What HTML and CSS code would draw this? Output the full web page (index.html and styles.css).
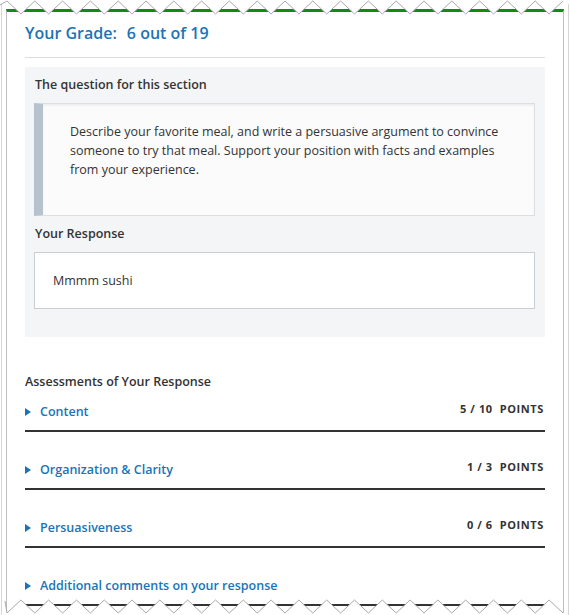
FILE: index.html
```html
<!DOCTYPE html>
<html>
<head>
<meta charset="utf-8">
<link rel="stylesheet" href="styles.css">
</head>
<body>
<div class="stack">
  <div class="card">
    <h1 class="grade"><span>Your Grade:</span><span class="grade-value">6 out of 19</span></h1>
    <hr class="rule">
    <section class="panel">
      <h2 class="label">The question for this section</h2>
      <blockquote class="question">Describe your favorite meal, and write a persuasive argument to convince someone to try that meal. Support your position with facts and examples from your experience.</blockquote>
      <h2 class="label">Your Response</h2>
      <div class="response">Mmmm sushi</div>
    </section>
    <h2 class="label assess-title">Assessments of Your Response</h2>
    <div class="row">
      <span class="toggle"><i class="tri"></i>Content</span>
      <span class="points">5 / 10<span class="pts-word">POINTS</span></span>
    </div>
    <div class="row">
      <span class="toggle"><i class="tri"></i>Organization &amp; Clarity</span>
      <span class="points">1 / 3<span class="pts-word">POINTS</span></span>
    </div>
    <div class="row">
      <span class="toggle"><i class="tri"></i>Persuasiveness</span>
      <span class="points">0 / 6<span class="pts-word">POINTS</span></span>
    </div>
    <div class="row">
      <span class="toggle"><i class="tri"></i>Additional comments on your response</span>
    </div>
  </div>
</div>
<svg class="edge edge-top" width="570" height="16" viewBox="0 0 570 16">
  <path fill="#fff" d="M0,0 H570 V5 L563,1 L549.1,14 L535.2,1 L521.3,14 L507.4,1 L493.5,14 L479.6,1 L465.7,14 L451.8,1 L437.9,14 L424,1 L410.1,14 L396.2,1 L382.3,14 L368.4,1 L354.5,14 L340.6,1 L326.7,14 L312.8,1 L298.9,14 L285,1 L271.1,14 L257.2,1 L243.3,14 L229.4,1 L215.5,14 L201.6,1 L187.7,14 L173.8,1 L159.9,14 L146,1 L132.1,14 L118.2,1 L104.3,14 L90.4,1 L76.5,14 L62.6,1 L48.7,14 L34.8,1 L20.9,14 L7,1 L0,5 Z"/>
  <path fill="none" stroke="#a9a9a9" stroke-width="1" d="M0,5 L7,1 L20.9,14 L34.8,1 L48.7,14 L62.6,1 L76.5,14 L90.4,1 L104.3,14 L118.2,1 L132.1,14 L146,1 L159.9,14 L173.8,1 L187.7,14 L201.6,1 L215.5,14 L229.4,1 L243.3,14 L257.2,1 L271.1,14 L285,1 L298.9,14 L312.8,1 L326.7,14 L340.6,1 L354.5,14 L368.4,1 L382.3,14 L396.2,1 L410.1,14 L424,1 L437.9,14 L451.8,1 L465.7,14 L479.6,1 L493.5,14 L507.4,1 L521.3,14 L535.2,1 L549.1,14 L563,1"/>
</svg>
<svg class="edge edge-bottom" width="570" height="16" viewBox="0 599 570 16">
  <path fill="#fff" d="M4,600 L7,613 L20.9,600 L34.8,613 L48.7,600 L62.6,613 L76.5,600 L90.4,613 L104.3,600 L118.2,613 L132.1,600 L146,613 L159.9,600 L173.8,613 L187.7,600 L201.6,613 L215.5,600 L229.4,613 L243.3,600 L257.2,613 L271.1,600 L285,613 L298.9,600 L312.8,613 L326.7,600 L340.6,613 L354.5,600 L368.4,613 L382.3,600 L396.2,613 L410.1,600 L424,613 L437.9,600 L451.8,613 L465.7,600 L479.6,613 L493.5,600 L507.4,613 L521.3,600 L535.2,613 L549.1,600 L563,613 L565,613 V616 H4 Z"/>
  <path fill="none" stroke="#a9a9a9" stroke-width="1" d="M5,601 L7,613 L20.9,600 L34.8,613 L48.7,600 L62.6,613 L76.5,600 L90.4,613 L104.3,600 L118.2,613 L132.1,600 L146,613 L159.9,600 L173.8,613 L187.7,600 L201.6,613 L215.5,600 L229.4,613 L243.3,600 L257.2,613 L271.1,600 L285,613 L298.9,600 L312.8,613 L326.7,600 L340.6,613 L354.5,600 L368.4,613 L382.3,600 L396.2,613 L410.1,600 L424,613 L437.9,600 L451.8,613 L465.7,600 L479.6,613 L493.5,600 L507.4,613 L521.3,600 L535.2,613 L549.1,600 L563,613"/>
</svg>
</body>
</html>
```
FILE: styles.css
```css
html, body {
  margin: 0;
  padding: 0;
  background: #fff;
  overflow: hidden;
}
body {
  font-family: "Open Sans", "Liberation Sans", sans-serif;
  color: #333;
  font-size: 12.5px;
  line-height: 19px;
  width: 570px;
  height: 615px;
  position: relative;
}
.stack {
  margin: 0 1px;
  padding: 9px 4px 0 4px;
  border-left: 1px solid #d6d6d6;
  border-right: 1px solid #d6d6d6;
  height: 640px;
}
.card {
  border: 1px solid #bdbdbd;
  border-top: 3px solid #138a13;
  padding: 0 18px;
  height: 700px;
  background: #fff;
}
.grade {
  margin: 9px 0 0;
  font-size: 16px;
  line-height: 24px;
  font-weight: 600;
  color: #1a74b8;
}
.grade-value {
  margin-left: 10px;
}
.rule {
  border: 0;
  border-top: 1px solid #dcdcdc;
  margin: 12px 0 9px;
  height: 0;
}
.panel {
  background: #f4f5f7;
  padding: 8px 10px 28px 9px;
}
.label {
  margin: 0;
  font-size: 12.5px;
  line-height: 19px;
  font-weight: 600;
  color: #333;
  padding-left: 1px;
}
.question {
  margin: 9px 0 8px;
  background: #fbfbfc;
  border: 1px solid #dcdfe2;
  border-left: 9px solid #b7c3cc;
  box-shadow: inset 0 2px 2px rgba(0,0,0,0.05);
  padding: 18px 24px 36px 27px;
}
.response {
  margin-top: 9px;
  background: #fff;
  border: 1px solid #c9ced2;
  padding: 18px 18px;
}
.assess-title {
  margin-top: 35px;
  padding-left: 0;
}
.row {
  display: flex;
  justify-content: space-between;
  align-items: flex-start;
  padding: 10px 0 9px;
  border-bottom: 2px solid #333;
  margin-top: 18px;
}
.assess-title + .row {
  margin-top: 0;
  padding-top: 11px;
}
.toggle {
  display: flex;
  align-items: center;
  color: #1a74b8;
  font-weight: 600;
}
.tri {
  width: 0;
  height: 0;
  border-left: 6px solid #1a74b8;
  border-top: 4px solid transparent;
  border-bottom: 4px solid transparent;
  margin-right: 9px;
}
.points {
  font-size: 11px;
  font-weight: 700;
  letter-spacing: 0.6px;
  color: #333;
  line-height: 13px;
  margin-top: 0;
  padding-right: 1px;
}
.pts-word {
  margin-left: 7px;
}
.edge {
  position: absolute;
  left: 0;
  display: block;
}
.edge-top {
  top: 0;
}
.edge-bottom {
  top: 599px;
}
```
